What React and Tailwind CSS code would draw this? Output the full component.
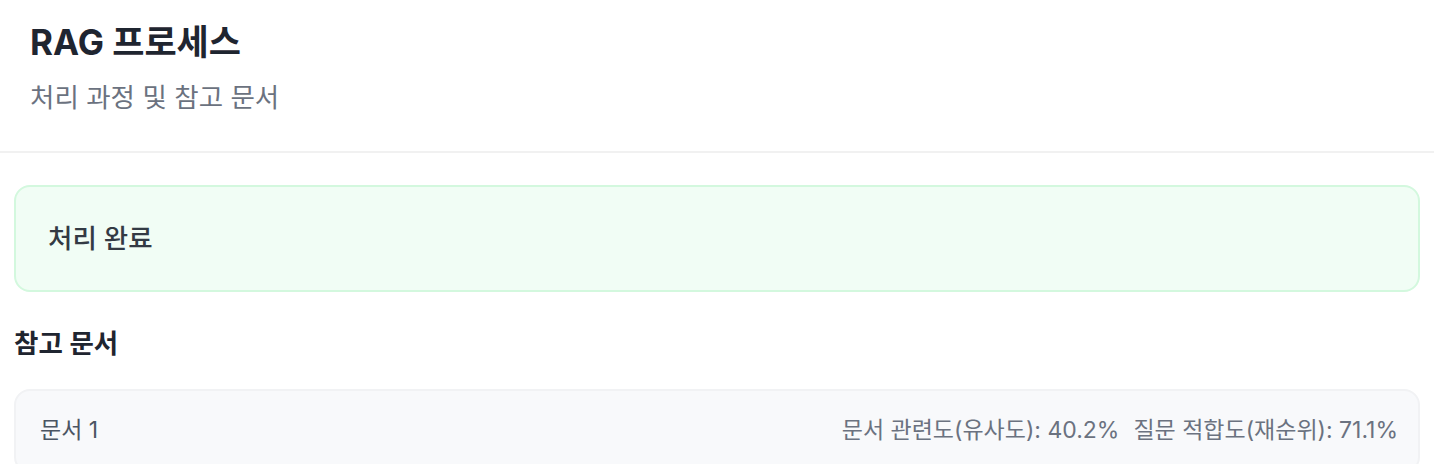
export default function App() {
  const ko = { fontFamily: 'Inter, "Noto Sans CJK KR", sans-serif' };
  return (
    <div className="w-[1434px] h-[464px] overflow-hidden bg-white" style={ko}>
      <div className="border-b-2 border-[#f1f1f1] px-[30px] pt-[22px] pb-[37px]">
        <h1 className="text-[35px] leading-[40px] font-bold text-[#1f2530]">RAG 프로세스</h1>
        <p className="mt-[18px] text-[26.5px] leading-[34px] text-[#6b7280]">처리 과정 및 참고 문서</p>
      </div>
      <div className="px-[14px] pt-[32px]">
        <div className="h-[107px] flex items-center rounded-[16px] border-2 border-[#d3f8de] bg-[#f1fdf5] pl-[32px]">
          <span className="text-[26.5px] font-medium text-[#333a44]">처리 완료</span>
        </div>
        <h2 className="mt-[34px] text-[26.5px] leading-[34px] font-semibold text-[#1f2530]">참고 문서</h2>
        <div className="mt-[29px] rounded-[16px] border-2 border-[#f1f2f4] bg-[#f8f9fb]">
          <div className="flex items-center justify-between pl-[24px] pr-[20px] pt-[24px] pb-[26px]">
            <span className="text-[23px] leading-[30px] text-[#4b5563]">문서 1</span>
            <div className="flex items-center gap-[14px] text-[23px] leading-[30px] text-[#6b7280]">
              <span>문서 관련도(유사도): 40.2%</span>
              <span>질문 적합도(재순위): 71.1%</span>
            </div>
          </div>
        </div>
      </div>
    </div>
  );
}
